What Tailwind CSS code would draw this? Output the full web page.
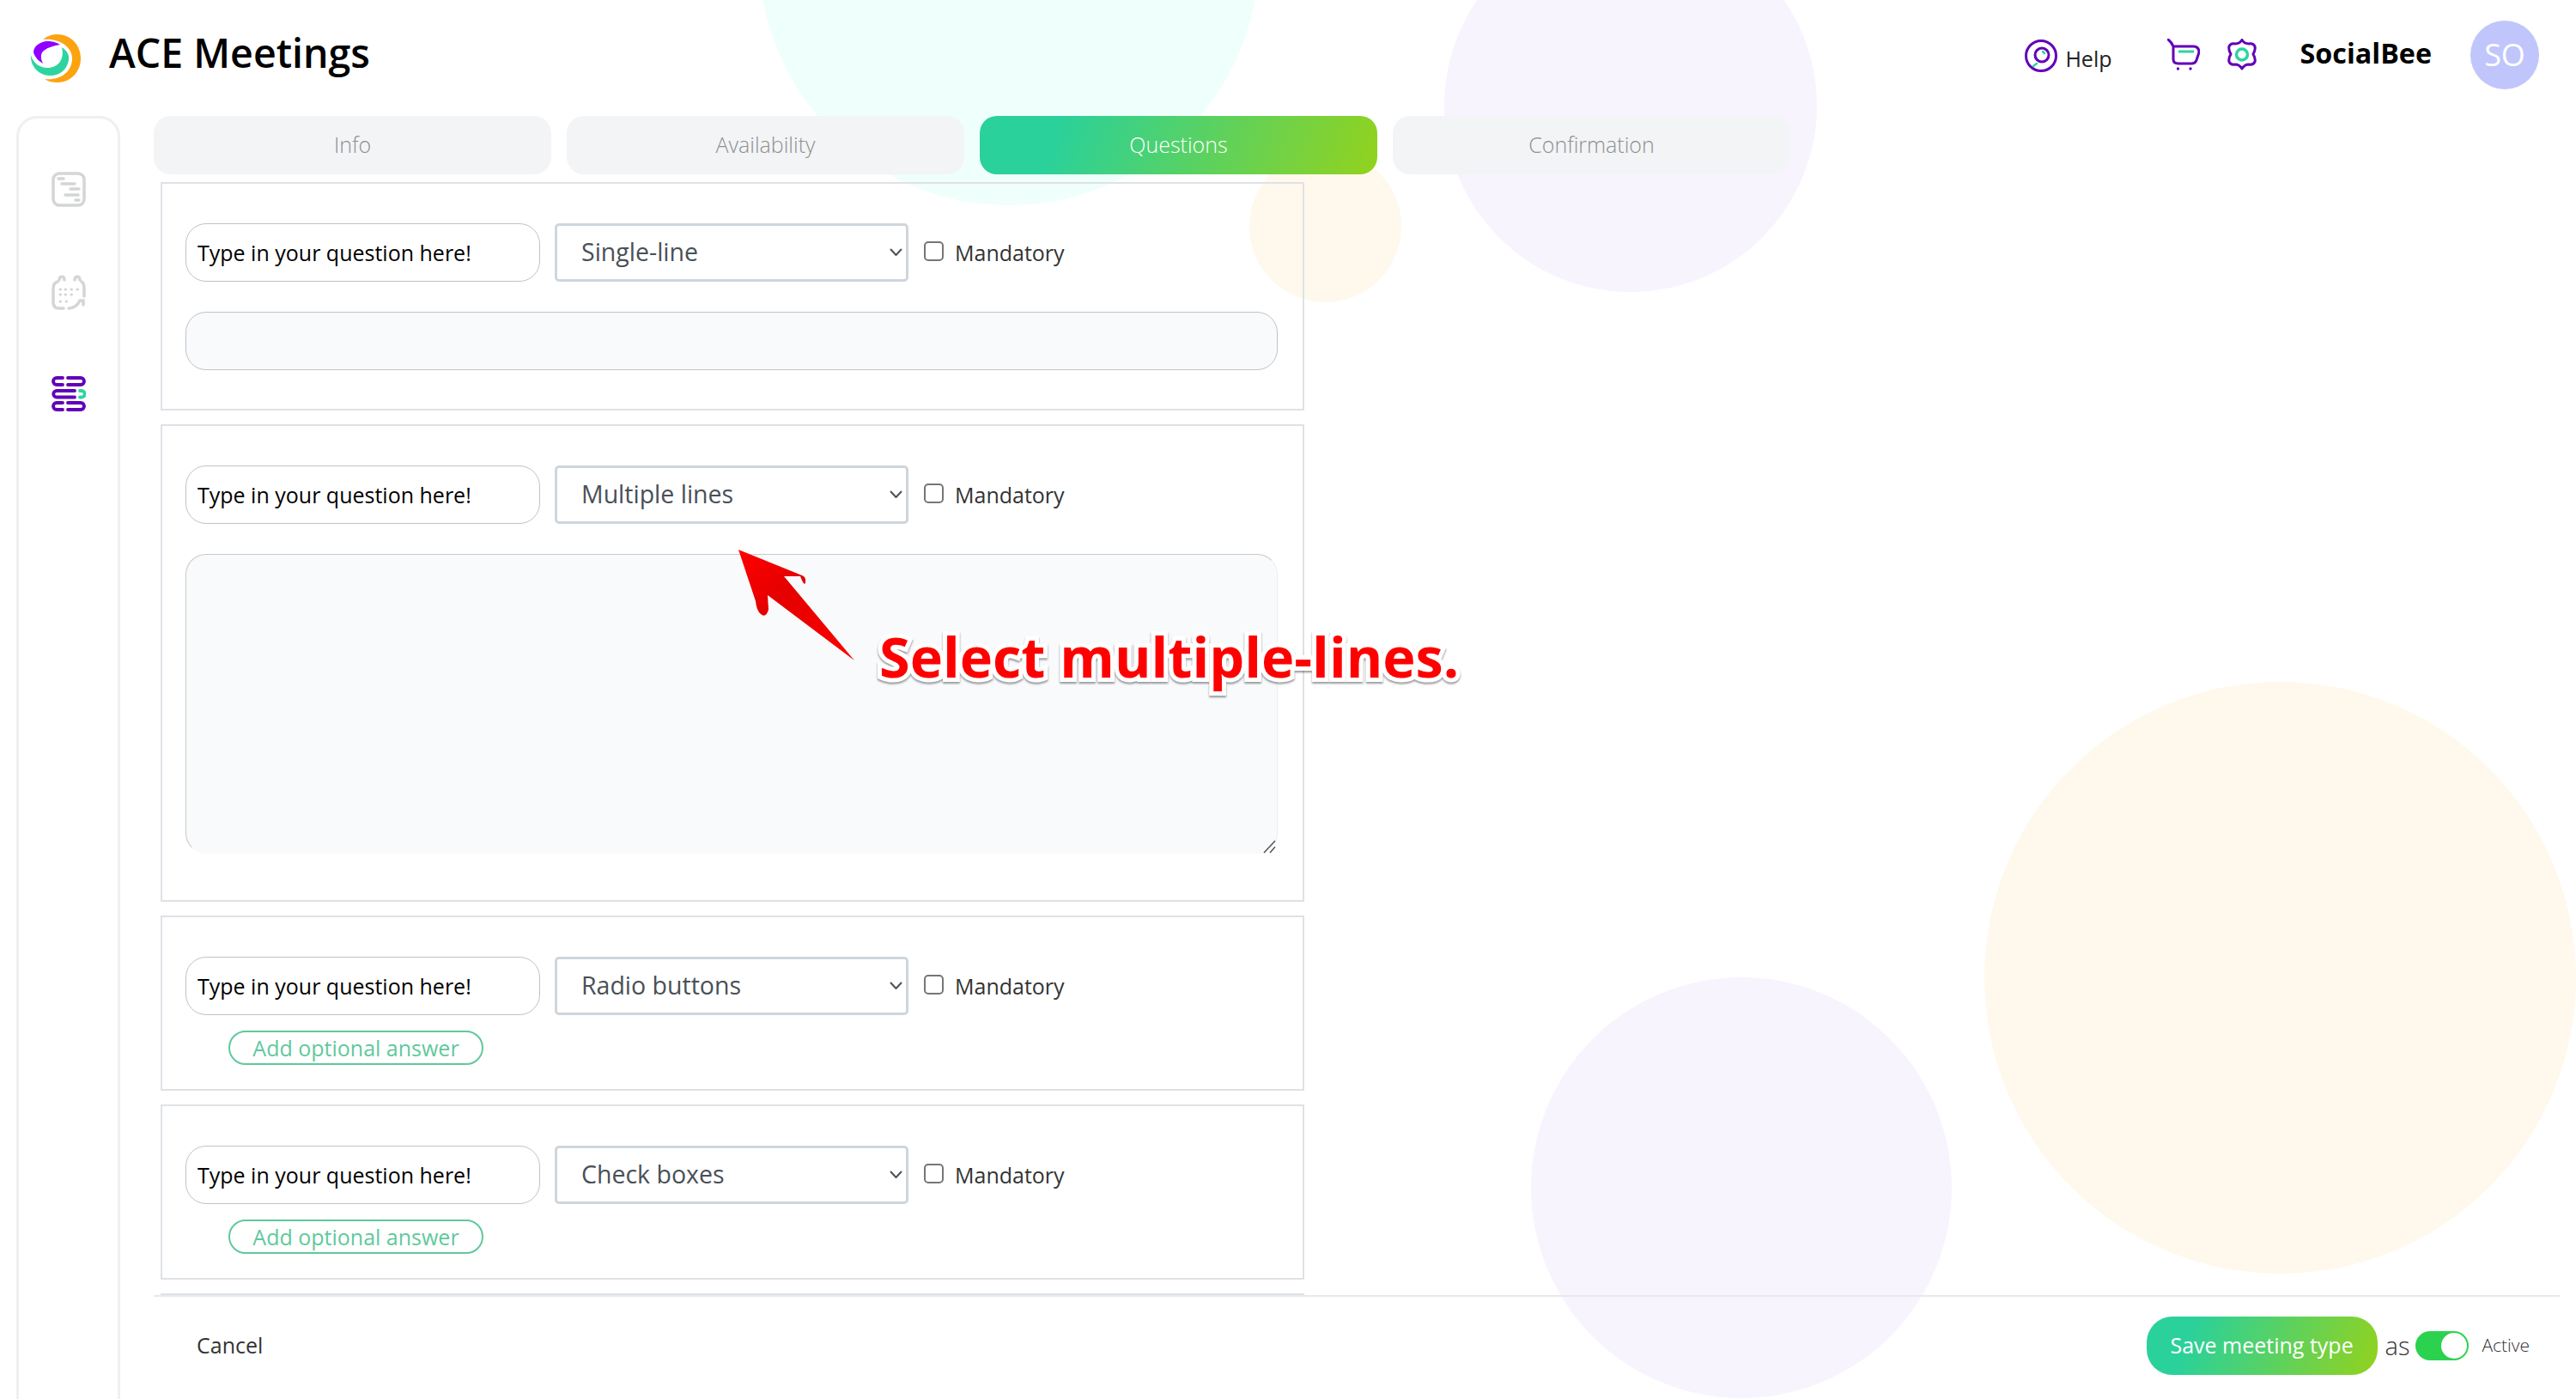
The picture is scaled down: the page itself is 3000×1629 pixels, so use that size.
<!DOCTYPE html>
<html lang="en">
<head>
    <meta charset="UTF-8">
    <meta name="viewport" content="width=device-width, initial-scale=1.0">
    <script src="https://cdn.jsdelivr.net/npm/@tailwindcss/browser@4"></script>
    <title>ACE Meetings</title>
</head>
<body class="bg-white font-['Open_Sans',sans-serif]">
<div class="relative w-[3000px] h-[1629px] overflow-hidden">
    <!-- background circles -->
    <div class="absolute left-[884px] top-[-343px] w-[582px] h-[582px] rounded-full bg-[#effffb]"></div>
    <div class="absolute left-[1455px] top-[175px] w-[177px] h-[177px] rounded-full bg-[#fef9ec]"></div>
    <div class="absolute left-[1682px] top-[-94px] w-[434px] h-[434px] rounded-full bg-[#f7f4fe]"></div>
    <div class="absolute left-[2311px] top-[794px] w-[689px] h-[689px] rounded-full bg-[#fef9ec]"></div>
    <div class="absolute left-[1783px] top-[1138px] w-[490px] h-[490px] rounded-full bg-[#f7f4fe]"></div>

    <div class="relative">
        <!-- header -->
        <header class="h-[135px] flex items-center pl-[36px] pr-[43px]">
            <svg class="w-[58px] h-[56px] mt-[1px] overflow-visible" viewBox="0 0 58 56">
                <path d="M14 6C20 1 26 0 31 0C46 0 58 12 58 28C58 44 46 56 31 56C26 56 20 55 16 52C34 54 48 44 48 28C48 14 32 4 14 6Z" fill="#fda30f"/>
                <path d="M0 24C2 32 8 38 18 39C30 40 40 30 36 15C42 19 45 24 44 30C42 42 32 49 21 48C8 47 -1 36 0 24Z" fill="#2dd4a0"/>
                <path d="M34 12C28 8 22 8 18 8C10 9 3 14 3 21C5 27 9 31 14 34C11 28 11 22 15 19C20 15 27 13 34 12Z" fill="#8f00ff"/>
            </svg>
            <h1 class="ml-[33px] text-[46.5px] font-semibold text-black leading-none mb-[12px]">ACE Meetings</h1>
            <div class="ml-auto flex items-center">
                <svg class="w-[38px] h-[38px] -mt-[5px]" viewBox="0 0 38 38" fill="none">
                    <circle cx="19" cy="19" r="17.5" stroke="#6200b8" stroke-width="3"/>
                    <circle cx="20" cy="18" r="8" stroke="#6200b8" stroke-width="3"/>
                    <path d="M21 14L23 16M10 31L14 28" stroke="#2dd4a0" stroke-width="2.5" stroke-linecap="round"/>
                </svg>
                <span class="ml-[9px] text-[25px] text-[#222] leading-none mt-[1px]">Help</span>
                <svg class="ml-[64px] w-[38px] h-[38px] -mt-[7px]" viewBox="0 0 38 38" fill="none">
                    <path d="M1 1Q5 4 7 9H30C35 9 37 12 37 16L34 25C33 28 31 29 28 29H13C9 29 7 27 7 24V9" stroke="#6200b8" stroke-width="3" stroke-linecap="round" stroke-linejoin="round"/>
                    <path d="M13 15H31" stroke="#2dd4a0" stroke-width="3"/>
                    <circle cx="12.5" cy="35" r="1.7" fill="#6200b8"/>
                    <circle cx="27" cy="35" r="1.7" fill="#6200b8"/>
                </svg>
                <svg class="ml-[32px] w-[34px] h-[38px] -mt-[7px]" viewBox="0 0 34 38" fill="none">
                    <path d="M17 1.5Q20 6 25 6Q30 5 32 9Q33 13 30 18Q33 23 32 27Q30 31 25 30Q20 30 17 35Q14 30 9 30Q4 31 2 27Q1 23 4 18Q1 13 2 9Q4 5 9 6Q14 6 17 1.5Z" stroke="#6200b8" stroke-width="3" stroke-linejoin="round"/>
                    <circle cx="17" cy="18.5" r="6.5" stroke="#2dd4a0" stroke-width="3.5"/>
                </svg>
                <span class="ml-[51px] text-[32.3px] font-bold text-black leading-none -mt-[13px]">SocialBee</span>
                <div class="ml-[45px] w-[80px] h-[80px] rounded-full bg-[#c0c6fb] text-white text-[36px] flex items-center justify-center -mt-[7px]">SO</div>
            </div>
        </header>

        <div class="flex pl-[19px] h-[1494px]">
            <!-- sidebar -->
            <aside class="w-[121px] h-[1520px] border-[3px] border-[#eff0f4] rounded-t-[24px] flex flex-col items-center pt-[62px] shrink-0">
                <svg class="w-[40px] h-[41px]" viewBox="0 0 40 41" fill="none" stroke="#d4d5d6" stroke-width="3.5" stroke-linecap="round">
                    <rect x="2" y="2" width="36" height="37" rx="7"/>
                    <path d="M8 8H14M12 14H27M22 20H32M16 27H31M28 33H32"/>
                </svg>
                <svg class="w-[40px] h-[41px] mt-[79px]" viewBox="0 0 40 41" fill="none" stroke="#d4d5d6" stroke-width="3.5" stroke-linecap="round">
                    <path d="M9 6C9 1 15 1 15 6M27 6C27 1 33 1 33 6"/>
                    <path d="M14 39H9C4 39 2 36 2 32V16C2 11 4 9 7 8M35 8C37 9 38 12 38 16V25M20 39C28 39 31 34 33 30H37V35"/>
                    <path d="M10 17H10.5M16 17H16.5M23 17H23.5M30 17H30.5M10 23H10.5M16 23H16.5M23 23H23.5M10 31H10.5M17 31H17.5" stroke-width="3"/>
                </svg>
                <svg class="w-[40px] h-[41px] mt-[77px]" viewBox="0 0 40 41" fill="none" stroke="#6200b8" stroke-width="3.8" stroke-linecap="round">
                    <path d="M13 2H6A4 4 0 0 0 6 10H13M19 2H34A4 4 0 0 1 34 10H19"/>
                    <path d="M27 17H6A3.75 3.75 0 0 0 6 24.5H27"/>
                    <path d="M33 17H35A3.75 3.75 0 0 1 35 24.5H33" stroke="#2dd4a0"/>
                    <path d="M13 31H6A4 4 0 0 0 6 39H13M19 31H34A4 4 0 0 1 34 39H19"/>
                </svg>
            </aside>

            <div class="ml-[39px] w-[2802px] flex flex-col">
                <!-- tabs -->
                <nav class="flex gap-[18px] w-[1906px] shrink-0">
                    <div class="flex-1 h-[68px] rounded-[20px] bg-[#f3f4f6] text-[#8f8f8f] font-light text-[25px] flex items-center justify-center">Info</div>
                    <div class="flex-1 h-[68px] rounded-[20px] bg-[#f3f4f6] text-[#8f8f8f] font-light text-[25px] flex items-center justify-center">Availability</div>
                    <div class="flex-1 h-[68px] rounded-[20px] bg-linear-[110deg] from-[#2bd19a] from-20% to-[#93d21d] text-white font-light text-[25px] flex items-center justify-center">Questions</div>
                    <div class="flex-1 h-[68px] rounded-[20px] bg-[#f3f4f6] text-[#8f8f8f] font-light text-[25px] flex items-center justify-center">Confirmation</div>
                </nav>

                <!-- question list -->
                <div class="ml-[8px] mt-[9px] w-[1332px] h-[1296px] overflow-hidden flex flex-col gap-[16px] shrink-0">
                    <section class="h-[266px] shrink-0 border-2 border-[#dee2e6] px-[27px] pt-[46px]">
                        <div class="flex items-center">
                            <input type="text" placeholder="Type in your question here!" class="w-[413px] h-[68px] pl-[13px] pr-[12px] pb-[1px] border border-[#bfc3c7] rounded-[24px] bg-white text-[25px] placeholder:text-black">
                            <div class="relative ml-[17px] w-[412px]">
                                <select class="block w-full h-[68px] pl-[28px] pb-[2px] appearance-none border-[3px] border-[#ced6dd] rounded-[5px] bg-white text-[28.5px] text-[#495057]"><option>Single-line</option></select>
                                <svg class="absolute right-[7px] top-[29px] w-[15px] h-[9px]" viewBox="0 0 15 9" fill="none" stroke="#495057" stroke-width="2"><path d="M1 1L7.5 8L14 1"/></svg>
                            </div>
                            <input type="checkbox" class="ml-[18px] -mt-[3px] w-[23px] h-[23px] appearance-none border-2 border-[#767676] rounded-[5px] bg-white">
                            <span class="ml-[13px] mt-[1px] text-[25px] text-[#333]">Mandatory</span>
                        </div>
                        <input type="text" class="block mt-[35px] w-[1272px] h-[68px] border border-[#bfc3c7] rounded-[24px] bg-[#f9fafc]">
                    </section>
                    <section class="h-[556px] shrink-0 border-2 border-[#dee2e6] px-[27px] pt-[46px]">
                        <div class="flex items-center">
                            <input type="text" placeholder="Type in your question here!" class="w-[413px] h-[68px] pl-[13px] pr-[12px] pb-[1px] border border-[#bfc3c7] rounded-[24px] bg-white text-[25px] placeholder:text-black">
                            <div class="relative ml-[17px] w-[412px]">
                                <select class="block w-full h-[68px] pl-[28px] pb-[2px] appearance-none border-[3px] border-[#ced6dd] rounded-[5px] bg-white text-[28.5px] text-[#495057]"><option>Multiple lines</option></select>
                                <svg class="absolute right-[7px] top-[29px] w-[15px] h-[9px]" viewBox="0 0 15 9" fill="none" stroke="#495057" stroke-width="2"><path d="M1 1L7.5 8L14 1"/></svg>
                            </div>
                            <input type="checkbox" class="ml-[18px] -mt-[3px] w-[23px] h-[23px] appearance-none border-2 border-[#767676] rounded-[5px] bg-white">
                            <span class="ml-[13px] mt-[1px] text-[25px] text-[#333]">Mandatory</span>
                        </div>
                        <div class="relative mt-[35px] w-[1272px] h-[349px]">
                            <textarea class="block w-full h-full resize-none border border-t-[#c6c9cc] border-l-[#c6c9cc] border-r-[#eceef1] border-b-[#f9fafc] rounded-[24px] bg-[#f9fafc]"></textarea>
                            <svg class="absolute right-[2px] bottom-0 w-[15px] h-[16px]" viewBox="0 0 15 16" fill="none" stroke="#555" stroke-width="1.5"><path d="M1 15L14 1M8 15L14 8"/></svg>
                        </div>
                    </section>
                    <section class="h-[204px] shrink-0 border-2 border-[#dee2e6] px-[27px] pt-[46px]">
                        <div class="flex items-center">
                            <input type="text" placeholder="Type in your question here!" class="w-[413px] h-[68px] pl-[13px] pr-[12px] pb-[1px] border border-[#bfc3c7] rounded-[24px] bg-white text-[25px] placeholder:text-black">
                            <div class="relative ml-[17px] w-[412px]">
                                <select class="block w-full h-[68px] pl-[28px] pb-[2px] appearance-none border-[3px] border-[#ced6dd] rounded-[5px] bg-white text-[28.5px] text-[#495057]"><option>Radio buttons</option></select>
                                <svg class="absolute right-[7px] top-[29px] w-[15px] h-[9px]" viewBox="0 0 15 9" fill="none" stroke="#495057" stroke-width="2"><path d="M1 1L7.5 8L14 1"/></svg>
                            </div>
                            <input type="checkbox" class="ml-[18px] -mt-[3px] w-[23px] h-[23px] appearance-none border-2 border-[#767676] rounded-[5px] bg-white">
                            <span class="ml-[13px] mt-[1px] text-[25px] text-[#333]">Mandatory</span>
                        </div>
                        <button class="block ml-[50px] mt-[18px] w-[297px] h-[40px] border-2 border-[#5fc99c] rounded-full text-[#5fc99c] text-[25px] leading-none">Add optional answer</button>
                    </section>
                    <section class="h-[204px] shrink-0 border-2 border-[#dee2e6] px-[27px] pt-[46px]">
                        <div class="flex items-center">
                            <input type="text" placeholder="Type in your question here!" class="w-[413px] h-[68px] pl-[13px] pr-[12px] pb-[1px] border border-[#bfc3c7] rounded-[24px] bg-white text-[25px] placeholder:text-black">
                            <div class="relative ml-[17px] w-[412px]">
                                <select class="block w-full h-[68px] pl-[28px] pb-[2px] appearance-none border-[3px] border-[#ced6dd] rounded-[5px] bg-white text-[28.5px] text-[#495057]"><option>Check boxes</option></select>
                                <svg class="absolute right-[7px] top-[29px] w-[15px] h-[9px]" viewBox="0 0 15 9" fill="none" stroke="#495057" stroke-width="2"><path d="M1 1L7.5 8L14 1"/></svg>
                            </div>
                            <input type="checkbox" class="ml-[18px] -mt-[3px] w-[23px] h-[23px] appearance-none border-2 border-[#767676] rounded-[5px] bg-white">
                            <span class="ml-[13px] mt-[1px] text-[25px] text-[#333]">Mandatory</span>
                        </div>
                        <button class="block ml-[50px] mt-[18px] w-[297px] h-[40px] border-2 border-[#5fc99c] rounded-full text-[#5fc99c] text-[25px] leading-none">Add optional answer</button>
                    </section>
                    <section class="h-[204px] shrink-0 border-2 border-[#dee2e6]"></section>
                </div>

                <!-- footer -->
                <footer class="h-[121px] border-t-2 border-[#e8e9ec] flex items-center pb-[5px] pl-[50px] pr-[35px] shrink-0">
                    <button class="text-[25px] text-[#333]">Cancel</button>
                    <button class="ml-auto w-[269px] h-[68px] rounded-[30px] bg-linear-[110deg] from-[#2bd19a] from-20% to-[#93d21d] text-white text-[25px]">Save meeting type</button>
                    <span class="ml-[9px] text-[29px] font-light text-[#333]">as</span>
                    <div class="ml-[7px] w-[62px] h-[34px] rounded-full bg-[#2bd24f] flex items-center justify-end pr-[2px]">
                        <div class="w-[30px] h-[30px] rounded-full bg-white"></div>
                    </div>
                    <span class="ml-[15px] text-[21px] font-light text-[#333]">Active</span>
                </footer>
            </div>
        </div>
    </div>

    <!-- annotation over the page -->
    <svg class="absolute left-[860px] top-[640px] w-[140px] h-[132px]" viewBox="0 0 140 132">
        <defs>
            <linearGradient id="arrowRed" x1="0" y1="0" x2="1" y2="1">
                <stop offset="0" stop-color="#ff0000"/>
                <stop offset="0.4" stop-color="#e40000"/>
                <stop offset="1" stop-color="#ff0000"/>
            </linearGradient>
        </defs>
        <path d="M0 0L74 30Q79 32 78 38Q77 44 72 31L53 31L135 129L34 53L35 70Q32 80 26 75Q21 71 20 60Z" fill="url(#arrowRed)"/>
    </svg>
    <div class="absolute left-[1024px] top-[717px] text-[64.8px] leading-[94px] font-bold whitespace-nowrap text-[#ff0000] [-webkit-text-stroke:10px_white] [paint-order:stroke_fill] drop-shadow-[0_2px_1px_rgba(0,0,0,0.4)]">Select multiple-lines.</div>
</div>
</body>
</html>
